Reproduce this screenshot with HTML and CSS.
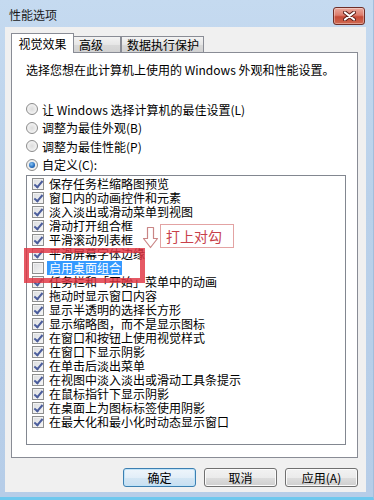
FILE: index.html
```html
<!DOCTYPE html>
<html lang="zh-CN">
<head>
<meta charset="utf-8">
<title>性能选项</title>
<link rel="stylesheet" href="styles.css">
</head>
<body>
<div class="window">
  <div class="titlebar">
    <span class="title">性能选项</span>
    <button class="close" aria-label="关闭">
      <svg width="13" height="10" viewBox="0 0 13 10">
        <path d="M2 1.5 L11 8.5 M11 1.5 L2 8.5" stroke="#5b1f18" stroke-width="4" stroke-linecap="round"/>
        <path d="M2 1.5 L11 8.5 M11 1.5 L2 8.5" stroke="#ffffff" stroke-width="2.2" stroke-linecap="round"/>
      </svg>
    </button>
  </div>
  <div class="client">
    <div class="tabs">
      <div class="tab active">视觉效果</div>
      <div class="tab adv">高级</div>
      <div class="tab">数据执行保护</div>
    </div>
    <div class="panel">
      <p class="desc">选择您想在此计算机上使用的 Windows 外观和性能设置。</p>
      <div class="radios">
        <div class="radio"><span class="rb"></span>让 Windows 选择计算机的最佳设置(L)</div>
        <div class="radio"><span class="rb"></span>调整为最佳外观(B)</div>
        <div class="radio"><span class="rb"></span>调整为最佳性能(P)</div>
        <div class="radio"><span class="rb on"></span>自定义(C):</div>
      </div>
      <div class="listbox">
        <div class="item"><span class="cb on"></span><span class="txt">保存任务栏缩略图预览</span></div>
        <div class="item"><span class="cb on"></span><span class="txt">窗口内的动画控件和元素</span></div>
        <div class="item"><span class="cb on"></span><span class="txt">淡入淡出或滑动菜单到视图</span></div>
        <div class="item"><span class="cb on"></span><span class="txt">滑动打开组合框</span></div>
        <div class="item"><span class="cb on"></span><span class="txt">平滑滚动列表框</span></div>
        <div class="item"><span class="cb on"></span><span class="txt">平滑屏幕字体边缘</span></div>
        <div class="item"><span class="cb"></span><span class="txt sel">启用桌面组合</span></div>
        <div class="item"><span class="cb on"></span><span class="txt">任务栏和「开始」菜单中的动画</span></div>
        <div class="item"><span class="cb on"></span><span class="txt">拖动时显示窗口内容</span></div>
        <div class="item"><span class="cb on"></span><span class="txt">显示半透明的选择长方形</span></div>
        <div class="item"><span class="cb on"></span><span class="txt">显示缩略图，而不是显示图标</span></div>
        <div class="item"><span class="cb on"></span><span class="txt">在窗口和按钮上使用视觉样式</span></div>
        <div class="item"><span class="cb on"></span><span class="txt">在窗口下显示阴影</span></div>
        <div class="item"><span class="cb on"></span><span class="txt">在单击后淡出菜单</span></div>
        <div class="item"><span class="cb on"></span><span class="txt">在视图中淡入淡出或滑动工具条提示</span></div>
        <div class="item"><span class="cb on"></span><span class="txt">在鼠标指针下显示阴影</span></div>
        <div class="item"><span class="cb on"></span><span class="txt">在桌面上为图标标签使用阴影</span></div>
        <div class="item"><span class="cb on"></span><span class="txt">在最大化和最小化时动态显示窗口</span></div>
        <div class="mark"></div>
        <div class="callout">
          <svg class="arrow" width="17" height="23" viewBox="0 0 17 23">
            <path d="M5.5 1.5 H11.5 V12.5 H15.5 L8.5 21.5 L1.5 12.5 H5.5 Z" fill="#ffffff" stroke="#c98585" stroke-width="1.2" stroke-linejoin="round"/>
          </svg>
          <span class="note">打上对勾</span>
        </div>
      </div>
    </div>
    <div class="buttons">
      <button class="btn default">确定</button>
      <button class="btn">取消</button>
      <button class="btn">应用(A)</button>
    </div>
  </div>
</div>
</body>
</html>
```

FILE: styles.css
```css
* { box-sizing: border-box; }
html, body { margin: 0; padding: 0; }
body {
  font-family: "Noto Sans CJK SC", "Noto Sans", sans-serif;
  font-size: 12px;
  color: #000;
  background: #bcd3ec;
}
.window {
  width: 374px;
  height: 500px;
  background: linear-gradient(#c5daf0, #bad1ea 40%, #b6cde8);
  border-bottom: 3px solid #6ec8ee;
  border-right: 1px solid #a3bedc;
  display: flex;
  flex-direction: column;
}
.titlebar {
  height: 27px;
  display: flex;
  justify-content: space-between;
  align-items: flex-start;
  padding: 0 8px 0 9px;
}
.title {
  margin-top: 8px;
  line-height: 14px;
  color: #1a1a1a;
}
.close {
  margin-top: 7px;
  width: 32px;
  height: 18px;
  padding: 0;
  border: 1px solid #6e2f28;
  border-radius: 3px;
  background: linear-gradient(#eba99c 0%, #dc7c6c 45%, #c54a36 55%, #d06a52 100%);
  box-shadow: inset 0 0 0 1px rgba(255, 255, 255, 0.35);
  display: flex;
  align-items: center;
  justify-content: center;
}
.client {
  margin-left: 5px;
  width: 361px;
  height: 465px;
  background: #f0f0f0;
  padding: 6px 8px 0 6px;
  display: flex;
  flex-direction: column;
}
.tabs {
  display: flex;
  align-items: flex-end;
  height: 20px;
  margin-bottom: -1px;
  position: relative;
  z-index: 1;
}
.tab {
  height: 16px;
  margin-bottom: 1px;
  padding: 0 4px 0 5px;
  border: 1px solid #898c95;
  border-bottom: none;
  background: linear-gradient(#f3f3f3, #e6e6e6 50%, #d9d9d9 51%, #d2d2d2);
  line-height: 15px;
  white-space: nowrap;
}
.tab.adv { width: 47px; border-left: none; }
.tab.active {
  height: 20px;
  width: 63px;
  margin-bottom: 0;
  background: #fff;
  text-align: center;
  padding: 0;
  line-height: 19px;
}
.panel {
  width: 347px;
  height: 406px;
  border: 1px solid #898c95;
  background: #fff;
  padding: 10px 11px 0 14px;
}
.desc {
  margin: 0;
  line-height: 14px;
  white-space: nowrap;
}
.radios {
  margin-top: 23px;
  display: flex;
  flex-direction: column;
}
.radio {
  height: 18.5px;
  display: flex;
  align-items: center;
  gap: 4px;
  white-space: nowrap;
}
.rb {
  width: 12px;
  height: 12px;
  border-radius: 50%;
  border: 1px solid #8b8b8b;
  background: radial-gradient(circle at 50% 50%, #dcdcdc 0%, #eeeeee 55%, #fbfbfb 100%);
  display: flex;
  align-items: center;
  justify-content: center;
  flex: none;
}
.rb.on::after {
  content: "";
  width: 6px;
  height: 6px;
  border-radius: 50%;
  background: radial-gradient(circle at 40% 35%, #8ac4f2 0%, #2a73c4 55%, #0e3f86 100%);
}
.listbox {
  margin-top: 1px;
  width: 320px;
  height: 270px;
  border: 1px solid #828790;
  padding-top: 1px;
  position: relative;
}
.item {
  height: 14px;
  display: flex;
  align-items: center;
  padding-left: 5px;
  white-space: nowrap;
}
.cb {
  width: 12px;
  height: 12px;
  border: 1px solid #8e8f8f;
  background: linear-gradient(135deg, #dadcdf, #f6f6f6);
  box-shadow: inset 0 0 0 1px #f2f2f2;
  margin-right: 3px;
  position: relative;
  flex: none;
}
.cb.on::after {
  content: "";
  position: absolute;
  left: 3px;
  top: 0px;
  width: 3px;
  height: 7px;
  border-right: 2px solid #4b5d9c;
  border-bottom: 2px solid #4b5d9c;
  transform: rotate(40deg);
}
.txt {
  line-height: 14px;
  padding: 0 1px 0 2px;
}
.txt.sel {
  background: #3399ff;
  color: #fff;
}
.mark {
  position: absolute;
  left: -3px;
  top: 72px;
  width: 121px;
  height: 35px;
  border: 5px solid rgba(224, 52, 66, 0.82);
}
.callout {
  position: absolute;
  left: 115px;
  top: 48px;
  display: flex;
  align-items: flex-start;
  gap: 1px;
}
.arrow { display: block; margin-top: 2px; }
.note {
  height: 24px;
  width: 74px;
  border: 1px solid #e3a3a3;
  background: #fff;
  color: #c8404a;
  font-size: 14px;
  line-height: 22px;
  padding-left: 5px;
}
.buttons {
  margin-top: 10px;
  display: flex;
  justify-content: flex-end;
  gap: 8px;
}
.btn {
  width: 73px;
  height: 19px;
  padding: 0;
  border: 1px solid #707070;
  border-radius: 3px;
  background: linear-gradient(#f2f2f2 0%, #ebebeb 50%, #dddddd 51%, #cfcfcf 100%);
  box-shadow: inset 0 0 0 1px #fbfbfb;
  font-family: inherit;
  font-size: 12px;
  line-height: 17px;
  color: #000;
}
.btn.default {
  border-color: #3c7fb1;
  background: linear-gradient(#eef5fb 0%, #e2eef8 50%, #d4e6f4 51%, #c8dff1 100%);
  box-shadow: inset 0 0 0 1px #bfe3f8;
}
```
